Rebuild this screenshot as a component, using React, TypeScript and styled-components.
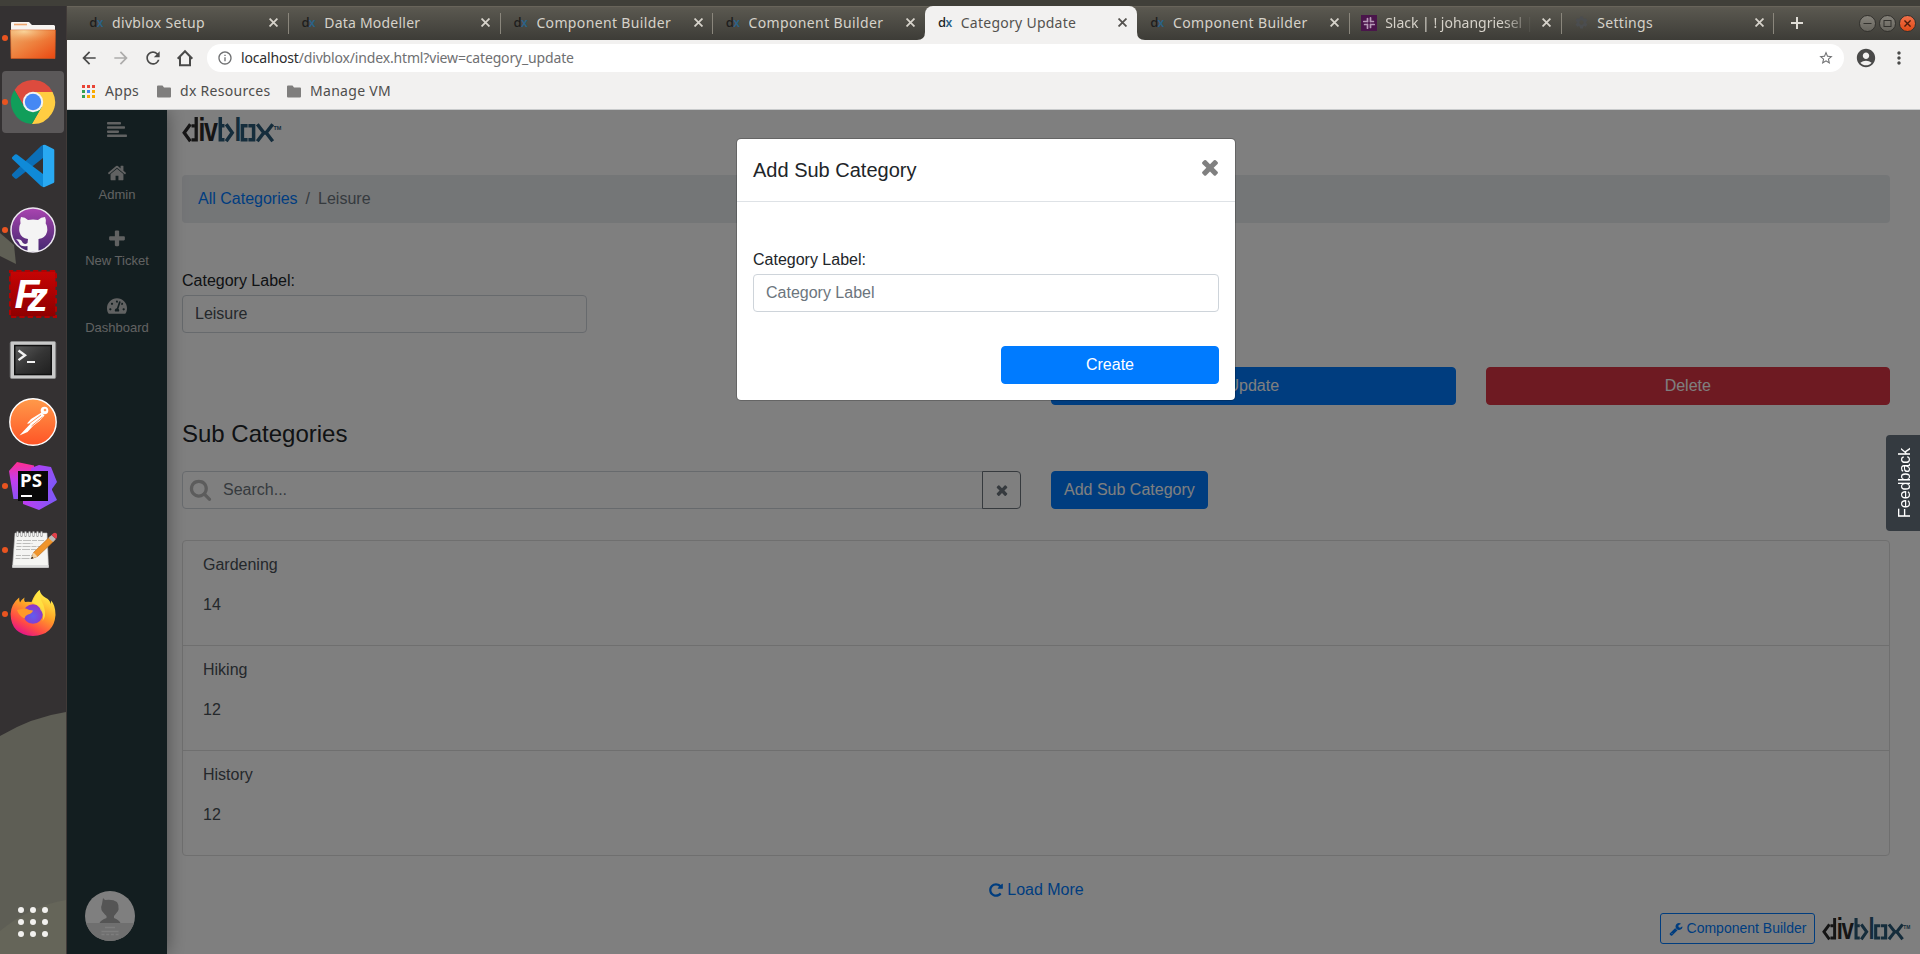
import React from "react";
import styled, { createGlobalStyle } from "styled-components";
import { FaTachometerAlt } from "react-icons/fa";
import { MdArrowBack, MdArrowForward, MdRefresh, MdAccountCircle, MdStarBorder, MdMoreVert, MdInfoOutline, MdSettings } from "react-icons/md";

const ui = `"Noto Sans", "Open Sans", sans-serif`;
const body = `"Liberation Sans", Arial, sans-serif`;

const GlobalStyle = createGlobalStyle`
  *, *::before, *::after { box-sizing: border-box; }
  html, body { margin: 0; padding: 0; overflow: hidden; }
  body { font: 16px/24px ${body}; color: #212529; background: #fff; }
  input, button { font-family: inherit; }
  svg { display: block; flex: none; }
`;

/* ---------- Desktop ---------- */

const Desktop = styled.div`
  width: 1920px;
  height: 954px;
  display: flex;
  flex-direction: column;
  overflow: hidden;
`;
const TopPanel = styled.div`
  height: 6px;
  flex: none;
  background: #403f39;
  overflow: hidden;
`;
const Workspace = styled.div`
  flex: 1;
  min-height: 0;
  display: flex;
`;
const DockBar = styled.nav`
  position: relative;
  width: 67px;
  flex: none;
  background: #343132;
  border-right: 1px solid #403a38;
  display: flex;
  flex-direction: column;
`;
const Wallpaper = styled.svg`
  position: absolute;
  inset: 0;
`;
const DockItem = styled.div<{ $active?: boolean }>`
  position: relative;
  height: 62px;
  margin: 1px 2px;
  width: 62px;
  border-radius: 4px;
  display: flex;
  align-items: center;
  justify-content: center;
  background: ${(p) => (p.$active ? "#5b5859" : "transparent")};
`;
const RunDot = styled.span`
  position: absolute;
  left: 0;
  top: 28px;
  width: 6px;
  height: 6px;
  border-radius: 50%;
  background: #e95420;
`;
const AppGrid = styled.div`
  position: relative;
  margin: auto 0 17px 18px;
  display: grid;
  grid-template-columns: repeat(3, 6px);
  gap: 6px;
`;
const GridDot = styled.i`
  width: 6px;
  height: 6px;
  border-radius: 50%;
  background: #f2f1ef;
`;

/* ---------- Browser chrome ---------- */

const Browser = styled.div`
  flex: 1;
  min-width: 0;
  display: flex;
  flex-direction: column;
`;
const TabStrip = styled.div`
  height: 34px;
  flex: none;
  display: flex;
  align-items: stretch;
  padding-left: 9.5px;
  background: linear-gradient(#5d5a52 0, #58564e 3px, #3d3c37 100%);
  border-top: 1px solid #68645a;
  font: 14px/31px ${ui};
  color: #d6d2ca;
`;
const Tab = styled.div<{ $active?: boolean; $line?: boolean }>`
  position: relative;
  width: 212.2px;
  flex: none;
  display: flex;
  align-items: center;
  padding: 0 10.5px 2px 11.5px;
  margin-top: ${(p) => (p.$active ? "-1px" : "0")};
  padding-top: ${(p) => (p.$active ? "1px" : "0")};
  border-radius: 8px 8px 0 0;
  background: ${(p) => (p.$active ? "#f2f1f0" : "transparent")};
  color: ${(p) => (p.$active ? "#54524f" : "inherit")};
  &::after {
    content: "";
    display: ${(p) => (p.$line ? "block" : "none")};
    position: absolute;
    right: 0;
    top: 6px;
    width: 1px;
    height: 21px;
    background: #8a867c;
  }
`;
const TabFoot = styled.svg<{ $side: "left" | "right" }>`
  position: absolute;
  bottom: 0;
  ${(p) => p.$side}: -8px;
`;
const TabTitle = styled.span<{ $track: number; $fade?: boolean }>`
  flex: 1;
  margin-left: 8px;
  overflow: hidden;
  white-space: nowrap;
  letter-spacing: ${(p) => p.$track}px;
  margin-right: ${(p) => (p.$fade ? "10px" : "0")};
  mask-image: ${(p) => (p.$fade ? "linear-gradient(90deg, #000 80%, transparent)" : "none")};
`;
const FavBox = styled.span`
  width: 16px;
  flex: none;
  display: flex;
  align-items: center;
  justify-content: center;
`;
const Fav = styled.span`
  font: 500 13px/16px ${ui};
  letter-spacing: -0.6px;
  color: #1d1d1d;
  b { font-weight: 600; color: #2b6287; font-size: 12px; }
`;
const NewTab = styled.div`
  width: 45px;
  display: flex;
  align-items: center;
  justify-content: center;
  padding-bottom: 1px;
`;
const WindowButtons = styled.div`
  margin-left: auto;
  padding: 0 4px 1px 0;
  display: flex;
  align-items: center;
  gap: 3px;
`;
const WinButton = styled.span<{ $close?: boolean }>`
  width: 17px;
  height: 17px;
  border-radius: 50%;
  border: 1px solid #33322e;
  background: ${(p) => (p.$close ? "linear-gradient(#f1714a, #df4a16)" : "linear-gradient(#85827a, #66645d)")};
  display: flex;
  align-items: center;
  justify-content: center;
`;
const Toolbar = styled.div`
  height: 36px;
  flex: none;
  background: #f2f1f0;
  display: flex;
  align-items: center;
  padding: 0 11px 0 12px;
  color: #4a4a49;
`;
const NavIcons = styled.div`
  width: 128px;
  display: flex;
  gap: 12px;
  svg:nth-child(2) { color: #adacab; }
`;
const Omnibox = styled.div`
  width: 1637px;
  height: 28px;
  border-radius: 14px;
  background: #fff;
  display: flex;
  align-items: center;
  padding: 0 10px;
  color: #6f7072;
  font: 14px/28px ${ui};
`;
const Url = styled.span`
  flex: 1;
  margin-left: 8px;
  letter-spacing: -0.16px;
  b { font-weight: 400; color: #2d2d2e; }
`;
const ToolbarEnd = styled.div`
  margin-left: 11px;
  display: flex;
  align-items: center;
  gap: 12px;
`;
const Bookmarks = styled.div`
  height: 34px;
  flex: none;
  background: #f2f1f0;
  border-bottom: 1px solid #c9cbcc;
  display: flex;
  align-items: center;
  padding: 0 0 3px 15px;
  font: 14px/24px ${ui};
  color: #4e4d4c;
`;
const Bookmark = styled.div<{ $width: number; $gap?: number }>`
  width: ${(p) => p.$width}px;
  display: flex;
  align-items: center;
  gap: ${(p) => p.$gap ?? 9}px;
  white-space: nowrap;
  letter-spacing: 0.3px;
`;

/* ---------- Web page ---------- */

const Page = styled.div`
  position: relative;
  flex: 1;
  min-height: 0;
  display: flex;
  overflow: hidden;
  background: #fff;
`;
const Backdrop = styled.div`
  position: absolute;
  inset: 0;
  background: rgba(0, 0, 0, 0.5);
  display: flex;
  justify-content: center;
  align-items: flex-start;
  padding: 28px 15px 0 0;
`;
const SideMenu = styled.aside`
  position: relative;
  width: 100px;
  flex: none;
  background: #273c40;
  box-shadow: 0 0 18px rgba(0, 0, 0, 0.4);
  color: #c2c4c4;
  display: flex;
  flex-direction: column;
  align-items: center;
  padding-bottom: 13px;
`;
const SideItem = styled.div<{ $gap: number }>`
  margin-top: ${(p) => p.$gap}px;
  display: flex;
  flex-direction: column;
  align-items: center;
  font-size: 13px;
  line-height: 20px;
`;
const IconSlot = styled.div<{ $h: number }>`
  height: ${(p) => p.$h}px;
  display: flex;
  align-items: center;
  justify-content: center;
`;
const Avatar = styled.div`
  margin: auto 14px 0 0;
  width: 50px;
  height: 50px;
`;
const Main = styled.main`
  flex: 1;
  min-width: 0;
  padding: 7px 30px 0 15px;
  display: flex;
  flex-direction: column;
`;
const Breadcrumb = styled.div`
  margin: 33px 0 46px;
  height: 48px;
  flex: none;
  padding: 12px 16px;
  border-radius: 4px;
  background: #e9ecef;
  color: #6c757d;
  display: flex;
  gap: 8px;
`;
const Link = styled.a`
  color: #007bff;
  display: inline-flex;
  align-items: center;
  gap: 3px;
`;
const Columns = styled.div`
  display: grid;
  grid-template-columns: repeat(4, 1fr);
  column-gap: 30px;
`;
const Field = styled.label`
  display: block;
`;
const FieldLabel = styled.span`
  display: block;
  margin-bottom: 2px;
`;
const TextInput = styled.input<{ $joined?: boolean }>`
  display: block;
  width: 100%;
  height: 38px;
  padding: 6px 12px;
  padding-left: ${(p) => (p.$joined ? "40px" : "12px")};
  font-size: 16px;
  line-height: 24px;
  color: #495057;
  background: #fff;
  border: 1px solid #ced4da;
  border-radius: ${(p) => (p.$joined ? "4px 0 0 4px" : "4px")};
  outline: none;
  &::placeholder { color: #6c757d; opacity: 1; }
`;
const Button = styled.button<{ $tone?: "primary" | "danger"; $col?: number }>`
  height: 38px;
  padding: 6px 12px;
  border: 1px solid ${(p) => (p.$tone === "danger" ? "#dc3545" : "#007bff")};
  background: ${(p) => (p.$tone === "danger" ? "#dc3545" : "#007bff")};
  color: #fff;
  border-radius: 4px;
  font-size: 16px;
  line-height: 24px;
  text-align: center;
  grid-column: ${(p) => p.$col ?? "auto"};
`;
const Actions = styled(Columns)`
  margin-top: 34px;
`;
const SectionTitle = styled.h4`
  margin: 14px 0 23px;
  font-size: 24px;
  line-height: 29px;
  font-weight: 400;
`;
const SearchRow = styled(Columns)`
  margin-bottom: 31px;
`;
const SearchGroup = styled.div`
  grid-column: span 2;
  display: flex;
  position: relative;
`;
const SearchIcon = styled.span`
  position: absolute;
  left: 7px;
  top: 7px;
  color: #b8b8b8;
`;
const ClearButton = styled.button`
  width: 39px;
  height: 38px;
  flex: none;
  margin-left: -1px;
  padding: 0;
  border: 1px solid #6c757d;
  border-radius: 0 4px 4px 0;
  background: transparent;
  color: #6c757d;
  display: flex;
  align-items: center;
  justify-content: center;
`;
const List = styled.ul`
  list-style: none;
  margin: 0;
  padding: 0;
  border: 1px solid #dfdfdf;
  border-radius: 4px;
`;
const ListItem = styled.li`
  padding: 12px 20px;
  height: 105px;
  color: #495057;
  & + & { border-top: 1px solid #dfdfdf; }
  &:first-child { height: 104px; }
`;
const ItemLine = styled.p`
  margin: 0 0 16px;
`;
const LoadMore = styled.div`
  margin-top: 22px;
  display: flex;
  justify-content: center;
`;
const BuilderBar = styled.div`
  position: absolute;
  right: 10px;
  bottom: 10px;
  display: flex;
  align-items: center;
  gap: 7px;
`;
const OutlineButton = styled.button`
  height: 31px;
  width: 155px;
  padding: 0;
  border: 1px solid #007bff;
  border-radius: 3px;
  background: transparent;
  color: #007bff;
  font-size: 14px;
  line-height: 21px;
  display: flex;
  align-items: center;
  justify-content: center;
  gap: 4px;
  white-space: nowrap;
`;
const Feedback = styled.div`
  position: absolute;
  right: 0;
  top: 325px;
  width: 34px;
  height: 96px;
  padding-right: 3px;
  border-radius: 0 4px 4px 0;
  background: #343a40;
  color: #fff;
  writing-mode: vertical-rl;
  transform: rotate(180deg);
  text-align: center;
  line-height: 31px;
`;

/* ---------- Dialog ---------- */

const Dialog = styled.section`
  width: 500px;
  border: 1px solid rgba(0, 0, 0, 0.2);
  border-radius: 5px;
  background: #fff;
  background-clip: padding-box;
`;
const DialogHeader = styled.header`
  height: 63px;
  padding: 16px;
  border-bottom: 1px solid #dee2e6;
  display: flex;
  justify-content: space-between;
`;
const DialogTitle = styled.h5`
  margin: 0;
  font-size: 20px;
  line-height: 30px;
  font-weight: 400;
`;
const CloseMark = styled.span`
  color: #808080;
  margin: 0 -3px 0 0;
`;
const DialogBody = styled.div`
  padding: 46px 16px 16px;
`;
const DialogActions = styled.div`
  margin-top: 34px;
  display: flex;
  justify-content: flex-end;
  ${Button} { width: 218px; }
`;

/* ---------- Glyphs ---------- */

const glyphs = {
  home: "M1472 992v480q0 26-19 45t-45 19h-384v-384h-256v384h-384q-26 0-45-19t-19-45v-480q0-1 .5-3t.5-3l575-474 575 474q1 2 1 6zm223-69l-62 74q-8 9-21 11h-3q-13 0-21-7l-692-577-692 577q-12 8-24 7-13-2-21-11l-62-74q-8-10-7-23.5t11-21.5l719-599q32-26 76-26t76 26l244 204v-195q0-14 9-23t23-9h192q14 0 23 9t9 23v408l219 182q10 8 11 21.5t-7 23.5z",
  plus: "M1600 736v192q0 40-28 68t-68 28h-416v416q0 40-28 68t-68 28h-192q-40 0-68-28t-28-68v-416h-416q-40 0-68-28t-28-68v-192q0-40 28-68t68-28h416v-416q0-40 28-68t68-28h192q40 0 68 28t28 68v416h416q40 0 68 28t28 68z",
  times: "M1490 1322q0 40-28 68l-136 136q-28 28-68 28t-68-28l-294-294-294 294q-28 28-68 28t-68-28l-136-136q-28-28-28-68t28-68l294-294-294-294q-28-28-28-68t28-68l136-136q28-28 68-28t68 28l294 294 294-294q28-28 68-28t68 28l136 136q28 28 28 68t-28 68l-294 294 294 294q28 28 28 68z",
  search: "M1216 832q0-185-131.5-316.5t-316.5-131.5-316.5 131.5-131.5 316.5 131.5 316.5 316.5 131.5 316.5-131.5 131.5-316.5zm512 832q0 52-38 90t-90 38q-54 0-90-38l-343-342q-179 124-399 124-143 0-273.5-55.5t-225-150-150-225-55.5-273.5 55.5-273.5 150-225 225-150 273.5-55.5 273.5 55.5 225 150 150 225 55.5 273.5q0 220-124 399l343 343q37 37 37 90z",
  wrench: "M448 1472q0-26-19-45t-45-19-45 19-19 45 19 45 45 19 45-19 19-45zm644-420l-682 682q-37 37-90 37-52 0-91-37l-106-108q-38-36-38-90 0-53 38-91l681-681q39 98 114.5 173.5t173.5 114.5zm634-435q0 39-23 106-47 134-164.5 217.5t-258.5 83.5q-185 0-316.5-131.5t-131.5-316.5 131.5-316.5 316.5-131.5q58 0 121.5 16.5t107.5 46.5q16 11 16 28t-16 28l-293 169v224l193 107q5-3 79-48.5t135.5-81 70.5-35.5q15 0 23.5 10t8.5 25z",
  reload: "M1664 256v448q0 26-19 45t-45 19h-448q-42 0-59-40-17-39 14-69l138-138q-148-137-349-137-104 0-198.5 40.5t-163.5 109.5-109.5 163.5-40.5 198.5 40.5 198.5 109.5 163.5 163.5 109.5 198.5 40.5q119 0 225-52t179-147q7-10 23-12 15 0 25 9l137 138q9 8 9.5 20.5t-7.5 22.5q-109 132-264 204.5t-327 72.5q-156 0-298-61t-245-164-164-245-61-298 61-298 164-245 245-164 298-61q147 0 284.5 55.5t244.5 156.5l130-129q29-31 70-14 39 17 39 59z",
};

function Glyph({ name, size }: { name: keyof typeof glyphs; size: number }) {
  return (
    <svg width={size} height={size} viewBox="0 0 1792 1792" fill="currentColor">
      <path d={glyphs[name]} />
    </svg>
  );
}

function Cross({ size = 8, color = "currentColor" }: { size?: number; color?: string }) {
  return (
    <svg width={size} height={size} viewBox="0 0 8 8" stroke={color} strokeWidth="1.6">
      <path d="M.5 .5l7 7M7.5 .5l-7 7" />
    </svg>
  );
}

const BrandMark = styled.svg`
  overflow: visible;
`;

function Brand({ width, height }: { width: number; height: number }) {
  return (
    <BrandMark width={width} height={height} viewBox="0 0 99 25" preserveAspectRatio="none" fontFamily={body} fontWeight="700">
      <g fill="none" stroke="#2b2a2b" strokeWidth="3.3">
        <path d="M8.4 7.2L2.2 15.7l6.2 8.5" />
        <path d="M9.5 8.8h3M14.2 0v22.8H9.5" />
      </g>
      <g fill="#2b2a2b" fontSize="33">
        <text transform="translate(16.6 24.3) scale(.75 1)">i</text>
        <text transform="translate(22 24.3) scale(.76 1)">v</text>
      </g>
      <g fill="none" stroke="#2b5a78" strokeWidth="3.5">
        <path d="M38.3 0v22.8h4.2M39 8.8h3.5" />
        <path d="M44.2 7.2l6 8.5-6 8.5" />
        <path d="M65.600 8.800h-5.200v14h5.200M66.400 8.800h5.200v14h-5.200" />
        <path d="M75.300 7.200l6.500 8.500-6.500 8.500M90.700 7.200l-6.500 8.500 6.500 8.500" />
        <path d="M81.500 15.700h3" />
      </g>
      <text fill="#2b5a78" fontSize="33" transform="translate(52.400 24.300) scale(.74 1)">l</text>
      <text fill="#2b5a78" fontSize="5.500" x="91.500" y="12.500">TM</text>
    </BrandMark>
  );
}

function Favicon() {
  return <Fav>d<b>x</b></Fav>;
}

function SlackIcon() {
  return (
    <svg width="16" height="16" viewBox="0 0 16 16">
      <rect width="16" height="16" fill="#4a154b" />
      <g stroke="#b79bb8" strokeWidth="1.7" strokeLinecap="round">
        <path d="M6.500 3.600v3M9.500 2.800v3.800M6.500 9.400v3.800M9.500 9.400v3M3.600 9.500h3M9.400 9.500h3.800M2.800 6.500h3.800M9.400 6.500h3" />
      </g>
    </svg>
  );
}

/* ---------- Dock icons ---------- */

const FolderIcon = () => (
  <svg width="48" height="48" viewBox="0 0 48 48">
    <defs>
      <linearGradient id="fo" x1="0" y1="0" x2="1" y2="1"><stop offset="0" stopColor="#eeb06e" /><stop offset=".5" stopColor="#ee7f3c" /><stop offset="1" stopColor="#ea4711" /></linearGradient>
      <radialGradient id="fg" cx=".3" cy=".1" r=".7"><stop offset="0" stopColor="#fbe0a8" stopOpacity=".8" /><stop offset="1" stopColor="#f29a55" stopOpacity="0" /></radialGradient>
    </defs>
    <path d="M2 22V9q0-1 1-1h17l3 3h22l1 1v12z" fill="#f7f4f1" />
    <path d="M5 10.500h13" stroke="#eda66e" strokeWidth="1.600" />
    <path d="M1.500 16h45L46 44.500H2z" fill="url(#fo)" stroke="#d5571f" strokeWidth=".6" />
    <path d="M1.500 16h45l-.2 9Q28 27 2 32z" fill="url(#fg)" />
  </svg>
);
const ChromeIcon = () => (
  <svg width="48" height="48" viewBox="0 0 48 48">
    <path d="M5.540 12.030A22 22 0 0 1 43.600 14H24v10l-8.660 5z" fill="#dd4b3e" />
    <path d="M43.600 14A22 22 0 0 1 22.860 46l9.800-17L24 24V14z" fill="#ffcd42" />
    <path d="M22.860 46A22 22 0 0 1 5.540 12.030L15.340 29 24 24l8.660 5z" fill="#119e5a" />
    <circle cx="24" cy="24" r="10.200" fill="#f3f3f3" />
    <circle cx="24" cy="24" r="8.200" fill="#4688f4" />
  </svg>
);
const CodeIcon = () => (
  <svg width="48" height="48" viewBox="0 0 48 48">
    <path d="M34 3v13L8 36.500q-1 .6-2 0l-2.700-2.400q-1-1 0-2L32 4z" fill="#0b6fb8" />
    <path d="M34 45V32L8 12.500q-1-.6-2 0L3.300 14.900q-1 1 0 2L32 44z" fill="#0f8ad8" />
    <path d="M34 3l2-.3 8.500 4.200q.8.400.8 1.500v31q0 1-.8 1.500L35 45.300 34 45z" fill="#29a9f2" />
  </svg>
);
const GithubIcon = () => (
  <svg width="48" height="48" viewBox="0 0 48 48">
    <defs><linearGradient id="gh" x1="0" y1="0" x2="0" y2="1"><stop offset="0" stopColor="#a944b0" /><stop offset="1" stopColor="#43286f" /></linearGradient></defs>
    <circle cx="24" cy="24" r="22" fill="url(#gh)" stroke="#ece6f0" strokeWidth="1.500" />
    <path d="M12 11q4 0 7 3 5-1 10 0 3-3 7-3 1.500 3 .7 6.500Q39 21 38 26q-1.500 6-8.500 7v12.500h-11V40q-7 1.500-8.500-3.500-1-2-3-3 5-1 6.500 3 2 2.500 5 .5l.5-4Q12 32 10.500 26q-1-5 1-8.500-.8-3.500.5-6.500z" fill="#f4f4f4" />
  </svg>
);
const FilezillaIcon = () => (
  <svg width="48" height="48" viewBox="0 0 48 48">
    <defs><linearGradient id="fz" x1="0" y1="0" x2="0" y2="1"><stop offset="0" stopColor="#c60404" /><stop offset="1" stopColor="#8f0000" /></linearGradient></defs>
    <rect x="1.500" y="1.500" width="45" height="45" fill="url(#fz)" />
    <rect x="1" y="1" width="46" height="46" fill="none" stroke="#b20202" strokeWidth="2" strokeDasharray="5.200 3.160" strokeDashoffset="2" />
    <text x="5.500" y="37.500" fontSize="41" fill="#fff" fontFamily={body} fontWeight="700" fontStyle="italic">F<tspan dx="-12" dy="3.500">z</tspan></text>
  </svg>
);
const TerminalIcon = () => (
  <svg width="48" height="48" viewBox="0 0 48 48">
    <defs>
      <linearGradient id="te" x1="0" y1="0" x2="1" y2="1"><stop offset="0" stopColor="#5a5a5a" /><stop offset=".5" stopColor="#353535" /><stop offset="1" stopColor="#202020" /></linearGradient>
    </defs>
    <rect x="1.300" y="7.500" width="45.400" height="37" rx="1.500" fill="#c9c9c9" stroke="#8b8b8b" />
    <rect x="5" y="10.800" width="38" height="30.500" fill="#111" />
    <rect x="6.500" y="12.300" width="35" height="27.500" fill="url(#te)" />
    <path d="M9.500 16.500l6.500 4.800-6.500 4.800" fill="none" stroke="#f2f2f2" strokeWidth="2.400" />
    <path d="M18 28h8" stroke="#f2f2f2" strokeWidth="2" />
  </svg>
);
const PostmanIcon = () => (
  <svg width="48" height="48" viewBox="0 0 48 48">
    <defs><linearGradient id="pm" x1="0" y1="0" x2="0" y2="1"><stop offset="0" stopColor="#ff9a4a" /><stop offset="1" stopColor="#ff5426" /></linearGradient></defs>
    <circle cx="24" cy="24" r="23.200" fill="url(#pm)" stroke="#fff" strokeWidth="1.400" />
    <circle cx="35.500" cy="12.500" r="3.800" fill="#fff" />
    <path d="M32.500 14.500L22 21l-4 4.500 3.500.3-5 5.200-6 6.500 8-3.500 6-6.500 6-4.500 5-5.500z" fill="#fff" />
    <path d="M20 26l12-9M22.500 28l11-9" stroke="#ff7b38" strokeWidth=".8" fill="none" />
    <circle cx="36" cy="12" r="1.300" fill="#ff9a5a" />
  </svg>
);
const StormIcon = () => (
  <svg width="48" height="48" viewBox="0 0 48 48">
    <defs>
      <linearGradient id="s1" x1=".3" y1="0" x2=".3" y2="1"><stop offset="0" stopColor="#ff2d90" /><stop offset=".5" stopColor="#c33df0" /><stop offset="1" stopColor="#8a53f5" /></linearGradient>
      <linearGradient id="s2" x1="0" y1="0" x2="1" y2="1"><stop offset="0" stopColor="#b63af5" /><stop offset=".6" stopColor="#8a55f5" /><stop offset="1" stopColor="#6b57ff" /></linearGradient>
      <linearGradient id="s3" x1="0" y1="0" x2="1" y2="0"><stop offset="0" stopColor="#c03cf2" /><stop offset="1" stopColor="#7b5af8" /></linearGradient>
    </defs>
    <path d="M8 0l17 3.500V12l-9 25H4.500L0 9z" fill="url(#s1)" />
    <path d="M22 6l8-3 12 2 6 15-5 7v10H22z" fill="url(#s2)" />
    <path d="M42 26l6 12-18 10-16-6V36z" fill="url(#s3)" />
    <rect x="9" y="9" width="30" height="30" fill="#080808" />
    <text x="11" y="24.500" fill="#fff" fontFamily={ui} fontWeight="700" fontSize="17" textLength="22" lengthAdjust="spacingAndGlyphs">PS</text>
    <rect x="12" y="33" width="11" height="2" fill="#fff" />
  </svg>
);
const NotesIcon = () => (
  <svg width="48" height="48" viewBox="0 0 48 48">
    <path d="M6 7h32l1.500 34.500h-36z" fill="#f5f5f3" stroke="#bbb" strokeWidth=".6" />
    <path d="M3.500 39h36v2.500h-36z" fill="#ddd" />
    <g stroke="#bdbdbb" strokeWidth="1" strokeDasharray="5 1 8 1"><path d="M8 14.500h27M7.500 17.500h16M7.500 20.500h27M7 23.500h20M7 29.500h22M6.500 32.500h18" /></g>
    <path d="M8.500 6v4M12.500 6v4M16.500 6v4M20.500 6v4M24.500 6v4M28.500 6v4M32.500 6v4" stroke="#999" strokeWidth="2.200" strokeLinecap="round" />
    <path d="M8.500 6.500v3M12.500 6.500v3M16.500 6.500v3M20.500 6.500v3M24.500 6.500v3M28.500 6.500v3M32.500 6.500v3" stroke="#eee" strokeWidth="1" strokeLinecap="round" />
    <path d="M22.500 32.500l2-6L41 10.500l4.500 4-17 16z" fill="#f0952c" stroke="#b56a1c" strokeWidth=".6" />
    <path d="M22.500 32.500l2-6 4 4z" fill="#f1d3a6" /><path d="M22 33l1-2.500 1.500 1.500z" fill="#222" />
    <path d="M39.500 12l3-3 4.500 4-3 3z" fill="#b9b9b9" /><path d="M42.500 9q3-3.500 5-1.500T47 13z" fill="#e0404a" />
  </svg>
);
const FirefoxIcon = () => (
  <svg width="48" height="48" viewBox="0 0 48 48">
    <defs>
      <linearGradient id="ff" x1=".8" y1=".1" x2=".3" y2="1"><stop offset="0" stopColor="#fff14a" /><stop offset=".4" stopColor="#ffa326" /><stop offset=".75" stopColor="#ff4a45" /><stop offset="1" stopColor="#e3138a" /></linearGradient>
      <radialGradient id="fp" cx=".5" cy=".6" r=".6"><stop offset="0" stopColor="#5f5df0" /><stop offset="1" stopColor="#9333c4" /></radialGradient>
    </defs>
    <path d="M30.500 0q-5 4-8 12-3.500-.5-6.500 0-1.500-2-.500-4.500-3 2-4.500 5-1-2-.8-5Q2 14 1.600 24 2 45 24 46 45 45 46.500 25q0-10-4.500-14.500v3.500Q40 9 37 8 32 5.500 30.500 0z" fill="url(#ff)" />
    <circle cx="24" cy="24" r="9.800" fill="url(#fp)" />
    <path d="M8 20q6-2 9-1.500 3 2 7 2-1 3-5 4-3 1-3.500 4Q10 26 8 20z" fill="#ff9a28" />
    <path d="M30.500 0q-4 5-7.500 12.500 7 2.500 8.500 7.500 4 4 2 11 4-5 2-12-1-5-3-8-2.500-5-2-11z" fill="#ffe644" opacity=".8" />
  </svg>
);

const dockItems = [
  { Icon: FolderIcon, running: true },
  { Icon: ChromeIcon, running: true, active: true },
  { Icon: CodeIcon },
  { Icon: GithubIcon, running: true },
  { Icon: FilezillaIcon },
  { Icon: TerminalIcon },
  { Icon: PostmanIcon },
  { Icon: StormIcon, running: true },
  { Icon: NotesIcon, running: true },
  { Icon: FirefoxIcon, running: true },
];

function Dock() {
  return (
    <DockBar>
      <Wallpaper width="66" height="948" viewBox="0 0 66 948">
        <path d="M0 227l14 12 2 19L0 250z" fill="#5f5f55" />
        <path d="M0 730Q32 711 66 706v242H0z" fill="#5e5e55" />
        <path d="M0 925Q30 900 66 894v54H0z" fill="#656559" />
      </Wallpaper>
      {dockItems.map(({ Icon, running, active }, i) => (
        <DockItem key={i} $active={active}>
          {running && <RunDot />}
          <Icon />
        </DockItem>
      ))}
      <AppGrid>{Array.from({ length: 9 }, (_, i) => <GridDot key={i} />)}</AppGrid>
    </DockBar>
  );
}

const tabs = [
  { title: "divblox Setup", line: true, track: 0.33 },
  { title: "Data Modeller", line: true, track: 0.22 },
  { title: "Component Builder", line: true, track: 0.36 },
  { title: "Component Builder", track: 0.36 },
  { title: "Category Update", active: true, track: 0.26 },
  { title: "Component Builder", line: true, track: 0.36 },
  { title: "Slack | ! johangriesel |", line: true, fade: true, icon: "slack", track: 0 },
  { title: "Settings", line: true, icon: "gear", track: 0.3 },
];

function Tabs() {
  return (
    <TabStrip>
      {tabs.map((t, i) => (
        <Tab key={i} $active={t.active} $line={t.line}>
          {t.active && (
            <>
              <TabFoot $side="left" width="8" height="8"><path d="M8 0v8H0Q8 8 8 0z" fill="#f2f1f0" /></TabFoot>
              <TabFoot $side="right" width="8" height="8"><path d="M0 0v8h8Q0 8 0 0z" fill="#f2f1f0" /></TabFoot>
            </>
          )}
          <FavBox>{t.icon === "slack" ? <SlackIcon /> : t.icon === "gear" ? <MdSettings size={15} color="#4b4d4f" /> : <Favicon />}</FavBox>
          <TabTitle $track={t.track} $fade={t.fade}>{t.title}</TabTitle>
          <IconSlot $h={16}><Cross size={9} /></IconSlot>
        </Tab>
      ))}
      <NewTab>
        <svg width="12" height="12" stroke="#e0ddd6" strokeWidth="2"><path d="M6 0v12M0 6h12" /></svg>
      </NewTab>
      <WindowButtons>
        <WinButton><svg width="9" height="9" stroke="#33322e"><path d="M.5 4.500h8" /></svg></WinButton>
        <WinButton><svg width="9" height="9" stroke="#33322e" fill="none"><rect x="1" y="1.500" width="7" height="6" /></svg></WinButton>
        <WinButton $close><Cross size={7} color="#4b1d0c" /></WinButton>
      </WindowButtons>
    </TabStrip>
  );
}

const FolderMark = () => (
  <svg width="14" height="13" viewBox="0 0 14 13" fill="#7f7e7d"><path d="M1 .5h4.500l1.500 2h6q1 0 1 1v8q0 1-1 1H1q-1 0-1-1v-10q0-1 1-1z" /></svg>
);

const gridColors = ["#e94435", "#e94435", "#e94435", "#34a253", "#4285f4", "#f9ab00", "#34a253", "#f9ab00", "#f9ab00"];

function Chrome() {
  return (
    <>
      <Tabs />
      <Toolbar>
        <NavIcons>
          <MdArrowBack size={20} />
          <MdArrowForward size={20} />
          <MdRefresh size={20} />
          <svg width="20" height="20" fill="none" stroke="currentColor" strokeWidth="2">
            <path d="M2.700 10.800L10 3.300l7.300 7.500M5 9v8.200h10V9" />
          </svg>
        </NavIcons>
        <Omnibox>
          <MdInfoOutline size={16} />
          <Url><b>localhost</b>/divblox/index.html?view=category_update</Url>
          <MdStarBorder size={16} />
        </Omnibox>
        <ToolbarEnd>
          <MdAccountCircle size={22} />
          <MdMoreVert size={20} />
        </ToolbarEnd>
      </Toolbar>
      <Bookmarks>
        <Bookmark $width={75} $gap={10}>
          <svg width="13" height="13">
            {gridColors.map((c, i) => <rect key={i} x={(i % 3) * 5} y={Math.floor(i / 3) * 5} width="3" height="3" fill={c} />)}
          </svg>
          Apps
        </Bookmark>
        <Bookmark $width={130}><FolderMark />dx Resources</Bookmark>
        <Bookmark $width={120}><FolderMark />Manage VM</Bookmark>
      </Bookmarks>
    </>
  );
}

const categories = [
  { name: "Gardening", count: 14 },
  { name: "Hiking", count: 12 },
  { name: "History", count: 12 },
];

function AddDialog() {
  return (
    <Dialog role="dialog">
      <DialogHeader>
        <DialogTitle>Add Sub Category</DialogTitle>
        <CloseMark><Glyph name="times" size={24} /></CloseMark>
      </DialogHeader>
      <DialogBody>
        <Field>
          <FieldLabel>Category Label:</FieldLabel>
          <TextInput placeholder="Category Label" />
        </Field>
        <DialogActions><Button>Create</Button></DialogActions>
      </DialogBody>
    </Dialog>
  );
}

function Sidebar() {
  return (
    <SideMenu>
      <SideItem $gap={12}>
        <svg width="20" height="15" fill="currentColor">
          <rect width="14" height="2.500" rx=".8" /><rect y="4.200" width="18" height="2.500" rx=".8" />
          <rect y="8.400" width="12" height="2.500" rx=".8" /><rect y="12.500" width="20" height="2.500" rx=".8" />
        </svg>
      </SideItem>
      <SideItem $gap={24}><IconSlot $h={24}><Glyph name="home" size={20} /></IconSlot>Admin</SideItem>
      <SideItem $gap={22}><IconSlot $h={24}><Glyph name="plus" size={20} /></IconSlot>New Ticket</SideItem>
      <SideItem $gap={23}><IconSlot $h={24}><FaTachometerAlt size={20} /></IconSlot>Dashboard</SideItem>
      <Avatar>
        <svg width="50" height="50" viewBox="0 0 50 50">
          <defs><clipPath id="av"><circle cx="25" cy="25" r="25" /></clipPath></defs>
          <g clipPath="url(#av)">
            <rect width="50" height="50" fill="#fff" />
            <path d="M0 32h50v18H0z" fill="#dedede" />
            <path d="M18 7l2 2q8-1 12 2 2 3 1.500 6Q34 18 33 20q-3 4-4 5v2q5 2 6.500 5h-21Q16 29 21.500 27v-2q-4-4-5-6-1-3 .5-6z" fill="#aaa" />
            <g stroke="#fafafa" strokeWidth="1.500"><path d="M20 36.500h10M16.500 40.500h17" /><path d="M16.500 43.500h17" strokeDasharray="3 1.700" /></g>
          </g>
        </svg>
      </Avatar>
    </SideMenu>
  );
}

export default function App() {
  return (
    <Desktop>
      <GlobalStyle />
      <TopPanel />
      <Workspace>
        <Dock />
        <Browser>
          <Chrome />
          <Page>
            <Sidebar />
            <Main>
              <Brand width={99} height={25} />
              <Breadcrumb>
                <Link>All Categories</Link>
                <span>/</span>
                <span>Leisure</span>
              </Breadcrumb>
              <Columns>
                <Field>
                  <FieldLabel>Category Label:</FieldLabel>
                  <TextInput defaultValue="Leisure" />
                </Field>
              </Columns>
              <Actions>
                <Button $col={3}>Update</Button>
                <Button $tone="danger">Delete</Button>
              </Actions>
              <SectionTitle>Sub Categories</SectionTitle>
              <SearchRow>
                <SearchGroup>
                  <TextInput $joined placeholder="Search..." />
                  <SearchIcon><Glyph name="search" size={23} /></SearchIcon>
                  <ClearButton><Glyph name="times" size={16} /></ClearButton>
                </SearchGroup>
                <div><Button>Add Sub Category</Button></div>
              </SearchRow>
              <List>
                {categories.map((c) => (
                  <ListItem key={c.name}>
                    <ItemLine>{c.name}</ItemLine>
                    <ItemLine>{c.count}</ItemLine>
                  </ListItem>
                ))}
              </List>
              <LoadMore><Link><Glyph name="reload" size={16} />Load More</Link></LoadMore>
            </Main>
            <BuilderBar>
              <OutlineButton><Glyph name="wrench" size={14} />Component Builder</OutlineButton>
              <Brand width={88} height={22} />
            </BuilderBar>
            <Backdrop><AddDialog /></Backdrop>
            <Feedback>Feedback</Feedback>
          </Page>
        </Browser>
      </Workspace>
    </Desktop>
  );
}
